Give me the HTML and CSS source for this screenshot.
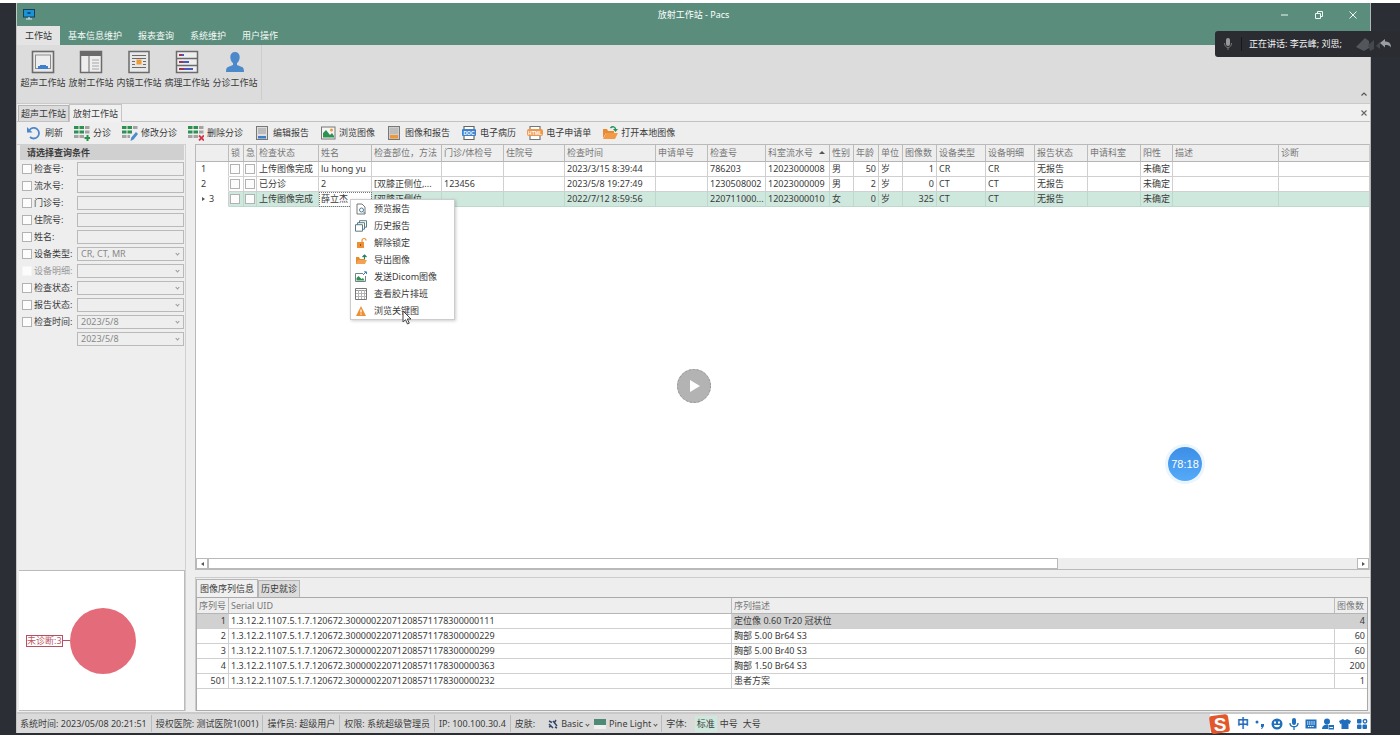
FILE: index.html
```html
<!DOCTYPE html>
<html lang="zh-CN">
<head>
<meta charset="utf-8">
<title>放射工作站 - Pacs</title>
<link rel="stylesheet" href="styles.css">
</head>
<body>
<div class="window">
  <header class="titlebar">
    <svg class="app-icon" width="12" height="11" viewBox="0 0 12 11"><rect x="0.5" y="0.5" width="11" height="7.500" fill="#1b93d8" stroke="#173f57"/><rect x="4.500" y="3" width="3" height="2" fill="#0d4a7a"/><path d="M3 10h6M6 8v2" stroke="#c9e8f5" stroke-width="1.200"/></svg>
    <h1 class="title">放射工作站 - Pacs</h1>
    <div class="controls">
      <button aria-label="最小化"><svg width="10" height="10" viewBox="0 0 10 10"><path d="M1 5h7"/></svg></button>
      <button aria-label="还原"><svg width="10" height="10" viewBox="0 0 10 10"><path d="M1.500 3.500h5v5h-5zM3.500 3V1.500h5v5H7"/></svg></button>
      <button aria-label="关闭"><svg width="10" height="10" viewBox="0 0 10 10"><path d="M1.500 1.500l7 7M8.500 1.500l-7 7"/></svg></button>
    </div>
  </header>
  <nav class="menu-tabs">
    <button class="active">工作站</button><button>基本信息维护</button><button>报表查询</button><button>系统维护</button><button>用户操作</button>
  </nav>
  <section class="ribbon">
    <div class="ribbon-group">
      <button><svg width="24" height="24" viewBox="0 0 24 24"><rect x="1.500" y="1.500" width="21" height="21" fill="#e8e8e8" stroke="#6b6b6b" stroke-width="1.600"/><rect x="4.500" y="5" width="15" height="13.500" fill="#eee" stroke="#8b8b8b"/><path d="M7 19v-3h2v-1h6v1h2v3z" fill="#3f7fcf"/></svg>超声工作站</button>
      <button><svg width="24" height="24" viewBox="0 0 24 24"><rect x="1.500" y="1.500" width="21" height="21" fill="#eee" stroke="#6b6b6b" stroke-width="1.500"/><path d="M1 1h22v5H1z" fill="#6b6b6b"/><path d="M10 6v16" stroke="#6b6b6b"/><path d="M13 10h7M13 13h7M13 16h7M13 19h7" stroke="#a5a5a5" stroke-width="1.200"/></svg>放射工作站</button>
      <button><svg width="24" height="24" viewBox="0 0 24 24"><rect x="2" y="1.500" width="20" height="21" fill="#e8e8e8" stroke="#6b6b6b" stroke-width="1.500"/><path d="M5 5.500h14M5 8.500h14M5 11.500h3M16 11.500h3M5 14.500h3M16 14.500h3M5 17.500h14" stroke="#6b6b6b" stroke-width="1.200"/><rect x="9.500" y="9.500" width="5" height="5" fill="#f09a35"/></svg>内镜工作站</button>
      <button><svg width="24" height="24" viewBox="0 0 24 24"><path d="M1.500 1.500h21v21h-21zM1.500 8.500h21M1.500 15.500h21" fill="#eee" stroke="#6b6b6b" stroke-width="1.500"/><path d="M4 5h4M4 12h5M4 19h7" stroke="#9b3355" stroke-width="2"/><path d="M7 5h2M8 12h6M9 19h9" stroke="#4b59ba" stroke-width="2"/></svg>病理工作站</button>
      <button><svg width="24" height="24" viewBox="0 0 24 24"><path d="M12 2c3 0 4.700 2 4.700 5 0 3-1.400 5.300-2.700 6v2l5 2c1.300.5 2 2 2 5H3c0-3 .7-4.500 2-5l5-2v-2C8.700 12.300 7.300 10 7.300 7c0-3 1.700-5 4.700-5z" fill="#4c89cb"/></svg>分诊工作站</button>
    </div>
    <button class="collapse" aria-label="折叠功能区"><svg width="8" height="6" viewBox="0 0 8 6"><path d="M1.500 4.500L4 2l2.500 2.500" fill="none" stroke="#555" stroke-width="1.200"/></svg></button>
  </section>
  <nav class="doc-tabs">
    <button>超声工作站</button><button class="active">放射工作站</button>
    <button class="close-doc" aria-label="关闭标签页"><svg width="8" height="8" viewBox="0 0 8 8"><path d="M1.500 1.500l5 5M6.500 1.500l-5 5" stroke="#666" stroke-width="1.100"/></svg></button>
  </nav>
  <div class="toolbar">
    <button><svg width="16" height="16" viewBox="0 0 16 16"><path d="M3.500 5A5.300 5.300 0 1 1 4 12" fill="none" stroke="#4b87cc" stroke-width="1.800"/><path d="M1 2v5.500h5.500z" fill="#4b87cc"/></svg>刷新</button>
    <button><svg width="16" height="16" viewBox="0 0 16 16"><path d="M0 1h4.500v3H0zM5.500 1H10v3H5.500zM0 5.500h4.500v3H0zM5.500 5.500H10v3H5.500z" fill="#2f9151"/><path d="M11 1h4.500v3H11zM11 5.500h4.500v3H11zM0 10h4.500v3H0zM5.500 10H10v3H5.500z" fill="#a3a3a3"/><path d="M13.500 10v6M10.500 13h6" stroke="#249247" stroke-width="2"/></svg>分诊</button>
    <button><svg width="16" height="16" viewBox="0 0 16 16"><path d="M0 1h4.500v3H0zM5.500 1H10v3H5.500zM0 5.500h4.500v3H0zM5.500 5.500H10v3H5.500z" fill="#2f9151"/><path d="M11 1h4.500v3H11zM0 10h4.500v3H0zM5.500 10H8v3H5.500z" fill="#a3a3a3"/><path d="M8.500 16l.8-3.500L14 7l2 2-4.500 5.500z" fill="#4d8bce"/></svg>修改分诊</button>
    <button><svg width="16" height="16" viewBox="0 0 16 16"><path d="M0 1h4.500v3H0zM5.500 1H10v3H5.500zM0 5.500h4.500v3H0zM5.500 5.500H10v3H5.500z" fill="#2f9151"/><path d="M11 1h4.500v3H11zM11 5.500h4.500v3H11zM0 10h4.500v3H0zM5.500 10H10v3H5.500z" fill="#a3a3a3"/><path d="M11 10.500l5 5M16 10.500l-5 5" stroke="#d0384f" stroke-width="1.800"/></svg>删除分诊</button>
    <button><svg width="16" height="16" viewBox="0 0 16 16"><rect x="2.500" y="1.500" width="11" height="13" fill="#dedede" stroke="#777"/><path d="M4 4h8M4 6h8M4 8h8" stroke="#999"/><path d="M4 11h8v2.500H4z" fill="#3d7fc7"/></svg>编辑报告</button>
    <button><svg width="16" height="16" viewBox="0 0 16 16"><rect x="1.500" y="2" width="13.500" height="12" fill="#f5f5f5" stroke="#777"/><path d="M3 12.500V8l3-3 4 5 2-2 2 3v1.500z" fill="#2f9151"/><circle cx="11.500" cy="5" r="1.500" fill="#f09a35"/></svg>浏览图像</button>
    <button><svg width="16" height="16" viewBox="0 0 16 16"><rect x="2.500" y="1.500" width="11" height="13" fill="#cfcfcf" stroke="#777"/><path d="M4 4h8M4 6h8M4 8h8" stroke="#aaa"/><path d="M4 10h8v3.500H4z" fill="#ef963d"/></svg>图像和报告</button>
    <button><svg width="16" height="16" viewBox="0 0 16 16"><path d="M3 5V1.500h10V5M3 10v4.500h10V10" fill="#fff" stroke="#666" stroke-width="1.200"/><rect x="1" y="4" width="14" height="7" rx="1" fill="#3d82cd"/><text x="8" y="9.500" class="icon-text">DOC</text></svg>电子病历</button>
    <button><svg width="16" height="16" viewBox="0 0 16 16"><path d="M3 5V1.500h10V5M3 10v4.500h10V10" fill="#fff" stroke="#777" stroke-width="1.200"/><rect x="0" y="4" width="16" height="7" rx="2" fill="#ee964a"/><text x="8" y="9.500" class="icon-text">HTML</text></svg>电子申请单</button>
    <button><svg width="16" height="16" viewBox="0 0 16 16"><path d="M1 13V4h4l1 2h6v2H4z" fill="#e88a32"/><path d="M1 14l3-6h12l-3 6z" fill="#f29a45"/><path d="M8.500 3c2-2 5-1.500 5 1.500" fill="none" stroke="#26915a" stroke-width="1.500"/><path d="M11 4h5l-2.500 3z" fill="#26915a"/></svg>打开本地图像</button>
  </div>
  <main class="workspace">
    <aside class="side">
      <form class="query">
        <h2>请选择查询条件</h2>
        <div class="field"><label><input type="checkbox">检查号:</label><input type="text" aria-label="检查号"></div>
        <div class="field"><label><input type="checkbox">流水号:</label><input type="text" aria-label="流水号"></div>
        <div class="field"><label><input type="checkbox">门诊号:</label><input type="text" aria-label="门诊号"></div>
        <div class="field"><label><input type="checkbox">住院号:</label><input type="text" aria-label="住院号"></div>
        <div class="field"><label><input type="checkbox">姓名:</label><input type="text" aria-label="姓名"></div>
        <div class="field"><label><input type="checkbox">设备类型:</label><span class="combo"><select aria-label="设备类型"><option>CR, CT, MR</option></select></span></div>
        <div class="field off"><label><input type="checkbox" disabled>设备明细:</label><span class="combo"><select aria-label="设备明细"><option></option></select></span></div>
        <div class="field"><label><input type="checkbox">检查状态:</label><span class="combo"><select aria-label="检查状态"><option></option></select></span></div>
        <div class="field"><label><input type="checkbox">报告状态:</label><span class="combo"><select aria-label="报告状态"><option></option></select></span></div>
        <div class="field"><label><input type="checkbox">检查时间:</label><span class="combo"><select aria-label="开始日期"><option>2023/5/8</option></select></span></div>
        <div class="field"><span class="combo"><select aria-label="结束日期"><option>2023/5/8</option></select></span></div>
      </form>
      <figure class="chart">
        <figcaption>未诊断:3</figcaption><span class="leader"></span><span class="pie"></span>
      </figure>
    </aside>
    <div class="content">
      <section class="grid-panel">
        <table class="grid">
          <colgroup><col class="w33"><col class="w15"><col class="w13"><col class="w62"><col class="w53"><col class="w70"><col class="w62"><col class="w61"><col class="w91"><col class="w52"><col class="w58"><col class="w64"><col class="w24"><col class="w25"><col class="w24"><col class="w34"><col class="w49"><col class="w49"><col class="w53"><col class="w53"><col class="w32"><col class="w106"><col></colgroup>
          <thead><tr><th></th><th>锁</th><th>急</th><th>检查状态</th><th>姓名</th><th>检查部位，方法</th><th>门诊/体检号</th><th>住院号</th><th>检查时间</th><th>申请单号</th><th>检查号</th><th class="sorted">科室流水号</th><th>性别</th><th>年龄</th><th>单位</th><th>图像数</th><th>设备类型</th><th>设备明细</th><th>报告状态</th><th>申请科室</th><th>阳性</th><th>描述</th><th>诊断</th></tr></thead>
          <tbody>
            <tr><td class="idx">1</td><td><input type="checkbox" aria-label="锁"></td><td><input type="checkbox" aria-label="急"></td><td>上传图像完成</td><td>lu hong yu</td><td></td><td></td><td></td><td>2023/3/15 8:39:44</td><td></td><td>786203</td><td>12023000008</td><td>男</td><td class="num">50</td><td>岁</td><td class="num">1</td><td>CR</td><td>CR</td><td>无报告</td><td></td><td>未确定</td><td></td><td></td></tr>
            <tr><td class="idx">2</td><td><input type="checkbox" aria-label="锁"></td><td><input type="checkbox" aria-label="急"></td><td>已分诊</td><td>2</td><td>[双膝正侧位,...</td><td>123456</td><td></td><td>2023/5/8 19:27:49</td><td></td><td>1230508002</td><td>12023000009</td><td>男</td><td class="num">2</td><td>岁</td><td class="num">0</td><td>CT</td><td>CT</td><td>无报告</td><td></td><td>未确定</td><td></td><td></td></tr>
            <tr class="selected"><td class="idx current">3</td><td><input type="checkbox" aria-label="锁"></td><td><input type="checkbox" aria-label="急"></td><td>上传图像完成</td><td class="focus">薛立杰</td><td>[双膝正侧位,...</td><td></td><td></td><td>2022/7/12 8:59:56</td><td></td><td>220711000...</td><td>12023000010</td><td>女</td><td class="num">0</td><td>岁</td><td class="num">325</td><td>CT</td><td>CT</td><td>无报告</td><td></td><td>未确定</td><td></td><td></td></tr>
          </tbody>
        </table>
        <div class="scrollbar"><button class="arrow" aria-label="向左滚动"></button><span class="track"><span class="thumb"></span></span><button class="arrow right" aria-label="向右滚动"></button></div>
        <menu class="context">
          <li><button><svg width="12" height="12" viewBox="0 0 12 12"><path d="M2 1h5l3 3v7H2z" fill="#fff" stroke="#777"/><circle cx="6.500" cy="7" r="2" fill="none" stroke="#4b7f93"/><path d="M8 8.500l2 2" stroke="#4b7f93"/></svg>预览报告</button></li>
          <li><button><svg width="12" height="12" viewBox="0 0 12 12"><path d="M4.500 3V.7h7v6.500h-2M2.500 5V2.700h7v6.500h-2M.5 4.700h7v6.500h-7z" fill="#fff" stroke="#5c7d86"/></svg>历史报告</button></li>
          <li><button><svg width="12" height="12" viewBox="0 0 12 12"><path d="M2 5h7v6H2z" fill="#ee8f35"/><path d="M7 5V3.500a2 2 0 0 1 4 0" fill="none" stroke="#ee8f35" stroke-width="1.200"/><path d="M5.500 7v2" stroke="#9b5419"/></svg>解除锁定</button></li>
          <li><button><svg width="12" height="12" viewBox="0 0 12 12"><path d="M1 10V3h3l1 2h5v5z" fill="#e58b32"/><path d="M1 10l2-4h9l-2 4z" fill="#f4a252"/><path d="M9.500 5V1M7.500 3l2-2 2 2" fill="none" stroke="#278365" stroke-width="1.200"/></svg>导出图像</button></li>
          <li><button><svg width="12" height="12" viewBox="0 0 12 12"><path d="M8 2.500H.5v8h10V5" fill="#fff" stroke="#728487"/><path d="M1.500 9.500V7l2-2 3 3 1.500-1 1.500 2.500z" fill="#2f9151"/><path d="M8 4l3-3M9 .8h2.500V3" stroke="#3f82b5" fill="none"/></svg>发送Dicom图像</button></li>
          <li><button><svg width="12" height="12" viewBox="0 0 12 12"><path d="M.5.5h11v11H.5z" fill="#fff" stroke="#777"/><path d="M1 2.500h10" stroke="#999"/><path d="M1 5.500h10M1 8.500h10M3.500 2v9M6.500 2v9M9.500 2v9" stroke="#b5b5b5"/></svg>查看胶片排班</button></li>
          <li><button><svg width="12" height="12" viewBox="0 0 12 12"><path d="M6 1l5 10H1z" fill="#ef8f35"/><path d="M6 4.500v3M6 8.500v1.200" stroke="#fff" stroke-width="1.200"/></svg>浏览关键图</button></li>
        </menu>
        <svg class="cursor" width="10" height="15" viewBox="0 0 10 15"><path d="M1 1v11l2.500-2.300L5.500 14l1.800-.8-2-4.200H9z" fill="#fff" stroke="#444"/></svg>
      </section>
      <section class="series-panel">
        <nav class="series-tabs"><button class="active">图像序列信息</button><button>历史就诊</button></nav>
        <div class="series-box">
        <table class="grid series">
          <colgroup><col class="w32"><col class="uid"><col><col class="w32"></colgroup>
          <thead><tr><th>序列号</th><th>Serial UID</th><th>序列描述</th><th>图像数</th></tr></thead>
          <tbody>
            <tr class="picked"><td class="num">1</td><td class="plain">1.3.12.2.1107.5.1.7.120672.30000022071208571178300000111</td><td>定位像 0.60 Tr20 冠状位</td><td class="num">4</td></tr>
            <tr><td class="num">2</td><td>1.3.12.2.1107.5.1.7.120672.30000022071208571178300000229</td><td>胸部 5.00 Br64 S3</td><td class="num">60</td></tr>
            <tr><td class="num">3</td><td>1.3.12.2.1107.5.1.7.120672.30000022071208571178300000299</td><td>胸部 5.00 Br40 S3</td><td class="num">60</td></tr>
            <tr><td class="num">4</td><td>1.3.12.2.1107.5.1.7.120672.30000022071208571178300000363</td><td>胸部 1.50 Br64 S3</td><td class="num">200</td></tr>
            <tr><td class="num">501</td><td>1.3.12.2.1107.5.1.7.120672.30000022071208571178300000232</td><td>患者方案</td><td class="num">1</td></tr>
          </tbody>
        </table>
        </div>
      </section>
    </div>
  </main>
  <footer class="statusbar">
    <span class="cell">系统时间: 2023/05/08 20:21:51</span>
    <span class="cell">授权医院: 测试医院1(001)</span>
    <span class="cell">操作员: 超级用户</span>
    <span class="cell">权限: 系统超级管理员</span>
    <span class="cell">IP: 100.100.30.4</span>
    <span class="cell skins">皮肤:
      <button><svg width="10" height="10" viewBox="0 0 10 10"><path d="M1 2l3 1.500M5 2l4 5M1 5l4 4M8 1L6.500 3.500M1 8l2-1M7 8l2 1" fill="none" stroke="#34466f" stroke-width="1.500"/></svg>Basic<i class="chev"></i></button>
      <button><svg width="12" height="12" viewBox="0 0 12 12"><path d="M0 1h12v6H0z" fill="#4e8a74"/><path d="M0 7h12v4H0z" fill="#efefef"/></svg>Pine Light<i class="chev"></i></button>
    </span>
    <span class="cell fonts">字体: <span class="sizes"><button class="active">标准</button><button>中号</button><button>大号</button></span></span>
    <div class="ime">
      <svg class="sogou" width="24" height="22" viewBox="0 0 24 22"><rect x="2" y="2" width="19" height="18" rx="3" fill="#e2572b" transform="rotate(-8 12 11)"/><text x="12" y="18" class="sogou-text">S</text></svg>
      <b>中</b>
      <svg width="12" height="12" viewBox="0 0 12 12"><circle cx="3" cy="4" r="1.500"/><path d="M7 6h3v2l-2 3H7l1-2H7z"/></svg>
      <svg width="12" height="12" viewBox="0 0 12 12"><circle cx="6" cy="6" r="5.500"/><path d="M3 3.500h2v2H3zM7 3.500h2v2H7zM3 7h6c0 3-6 3-6 0z" fill="#fff"/></svg>
      <svg width="12" height="12" viewBox="0 0 12 12"><rect x="4" y="0" width="4" height="7" rx="2"/><path d="M2 5c0 5 8 5 8 0M6 9v3" fill="none" stroke="#1f6fbc" stroke-width="1.300"/></svg>
      <svg width="12" height="12" viewBox="0 0 12 12"><path d="M.5 1.500h11v9H.5z"/><path d="M2 4h8M2 6h8M3 8.500h6" stroke="#fff" stroke-dasharray="1.200 .6"/></svg>
      <svg width="12" height="12" viewBox="0 0 12 12"><circle cx="5" cy="3.500" r="3"/><path d="M0 11c0-3 2-4.500 5-4.500h1V11z"/><path d="M6.500 7h5.500v4.500H6.500z"/><path d="M7.500 9.500h3.500" stroke="#fff"/></svg>
      <svg width="12" height="12" viewBox="0 0 12 12"><path d="M4 1c1 1.500 3 1.500 4 0l4 2-1.300 3L9.500 5.500V11h-7V5.500L1.300 6 0 3z"/></svg>
      <svg width="12" height="12" viewBox="0 0 12 12"><rect x="1" y="1" width="4.500" height="4.500" rx="1"/><circle cx="9" cy="3.300" r="1.800" fill="none" stroke="#1f6fbc" stroke-width="1.300"/><rect x="1" y="6.500" width="4.500" height="4.500" rx="1"/><rect x="6.500" y="6.500" width="4.500" height="4.500" rx="1"/></svg>
    </div>
  </footer>
</div>
<div class="speaking">
  <svg width="10" height="14" viewBox="0 0 10 14"><rect x="3" y="1" width="4" height="8" rx="2" fill="#999"/><path d="M1.500 6c0 6 7 6 7 0M5 10.500V13" fill="none" stroke="#777"/></svg>
  <span class="names">正在讲话: 李云峰; 刘思;</span>
  <svg width="36" height="18" viewBox="0 0 36 18"><path d="M0 12l9-9 4 3v7l-5 3z" fill="#53565b"/><path d="M12 10l6-5v9l-4 2z" fill="#45484d"/><path d="M20 11l4-4v7z" fill="#45484d"/><path d="M24 8l5-4v2.500c4 0 6 2 6 6-1.500-2-3-2.500-6-2.500v2.500z" fill="#9a9da1"/></svg>
</div>
<button class="play" aria-label="播放"><svg width="36" height="36" viewBox="0 0 36 36"><circle cx="18" cy="18" r="17" fill="#b3b3b3"/><circle cx="18" cy="18" r="16.500" fill="none" stroke="#989898" stroke-dasharray="2 2"/><path d="M14 12v12l10-6z" fill="#fff"/></svg></button>
<div class="timer">78:18</div>
</body>
</html>
```
FILE: styles.css
```css
*, *::before, *::after { box-sizing: border-box; }
html, body { height: 100%; }
body {
  margin: 0;
  padding: 3px 29px 2px 16px;
  position: relative;
  overflow: hidden;
  background: linear-gradient(#fff 0 3px, #2c2e36 3px);
  font: 9px/14px "Noto Sans", "Noto Sans CJK SC", sans-serif;
  color: #3a3a3a;
}
button, input, select { font: inherit; color: inherit; margin: 0; padding: 0; border: 0; background: none; border-radius: 0; }
button { white-space: nowrap; }
svg { flex: none; display: block; }
h1, h2 { margin: 0; font-size: inherit; }

.window { height: 100%; display: flex; flex-direction: column; background: #eee; border-left: 1px solid #c5c5c5; border-right: 1px solid #b5b5b5; }

.titlebar { height: 23px; flex: none; display: grid; grid-template-columns: 1fr auto 1fr; align-items: center; background: #5a8d7c; color: #fff; }
.app-icon { margin-left: 6px; }
.title { font-weight: 400; }
.controls { display: flex; justify-content: flex-end; }
.controls button { width: 34px; height: 22px; display: grid; place-items: center; }
.controls path { fill: none; stroke: #f1f7f4; }

.menu-tabs { height: 19px; flex: none; display: flex; background: #5a8d7c; color: #f4faf7; }
.menu-tabs button { padding: 0 8px; }
.menu-tabs .active { background: #e4e4e4; color: #333; }

.ribbon { height: 59px; flex: none; display: flex; justify-content: space-between; align-items: flex-end; background: #dcdcdc; border-bottom: 1px solid #c9c9c9; }
.ribbon-group { align-self: stretch; display: flex; padding: 5px 2px 0 2px; margin-bottom: 3px; border-right: 1px solid #cdcdcd; }
.ribbon-group button { width: 48px; display: flex; flex-direction: column; align-items: center; justify-content: flex-start; gap: 2px; }
.collapse { padding: 6px 2px; }

.doc-tabs { height: 18px; flex: none; display: flex; padding-left: 1px; background: #f0f0f0; border-bottom: 1px solid #c2c2c2; }
.doc-tabs button { padding: 0 2px; border: 1px solid #b5b5b5; border-bottom: 0; background: #dcdcdc; margin-top: 1px; }
.doc-tabs .active { padding: 0 3px; margin: 0 0 -1px; background: #f0f0f0; border-color: #c5c5c5; }
.doc-tabs .close-doc { margin-left: auto; border: 0; background: none; }

.toolbar { height: 22px; flex: none; display: flex; align-items: center; gap: 11px; padding: 0 9px; overflow: hidden; }
.toolbar button { display: flex; align-items: center; gap: 3px; }
.icon-text { font: bold 5px "Liberation Sans", sans-serif; fill: #fff; text-anchor: middle; }

.workspace { flex: 1; min-height: 0; display: flex; gap: 9px; padding-bottom: 1px; }
.side { width: 169px; flex: none; display: flex; flex-direction: column; border-top: 1px solid #d0d0d0; border-right: 1px solid #d0d0d0; }
.query { flex: 1; padding: 0 1px 0 3px; display: flex; flex-direction: column; gap: 3px; }
.query h2 { height: 15px; line-height: 16px; padding-left: 7px; margin-bottom: -1px; background: #d0d0d0; }
.field { height: 14px; display: flex; justify-content: flex-end; }
.field label { flex: 1; display: flex; align-items: center; gap: 2px; padding-left: 2px; }
input[type="checkbox"] { appearance: none; width: 10px; height: 10px; flex: none; display: block; background: #fcfcfc; border: 1px solid #b2b2b2; }
.off { color: #999; }
.off input[type="checkbox"] { border-color: #f5f5f5; }
.field > input, .combo { width: 107px; height: 14px; border: 1px solid #b9b9b9; background: #eee; }
.combo { position: relative; display: flex; color: #888; }
.combo::after, .chev { content: ""; width: 3px; height: 3px; border: solid #999; border-width: 0 1px 1px 0; transform: rotate(45deg); }
.combo::after { position: absolute; right: 4px; top: 4px; pointer-events: none; }
.combo select { appearance: none; width: 100%; padding: 0 3px; line-height: 12px; }
.chart { height: 141px; flex: none; margin: 0 0 0 2px; padding-left: 7px; display: flex; align-items: center; background: #fff; border: 1px solid #bbb; border-left: 0; }
.chart figcaption { border: 1px solid #b5505f; color: #bf5363; line-height: 10px; height: 12px; white-space: nowrap; }
.leader { width: 7px; height: 1px; background: #b5505f; }
.pie { width: 66px; height: 66px; border-radius: 50%; background: #e46b79; }

.content { flex: 1; min-width: 0; display: flex; flex-direction: column; }
.grid-panel { position: relative; flex: 1; display: flex; flex-direction: column; justify-content: space-between; background: #fff; border: 1px solid #b9b9b9; border-right-color: #ccc; }
.grid { width: 100%; table-layout: fixed; border-collapse: separate; border-spacing: 0; }
.grid th { height: 17px; padding: 0 2px; line-height: 16px; text-align: left; font-weight: 400; color: #777; background: #eee; border-right: 1px solid #bcbcbc; border-bottom: 1px solid #b5b5b5; white-space: nowrap; overflow: hidden; }
.grid td { height: 15px; padding: 0 2px; line-height: 14px; border-right: 1px solid #d0d0d0; border-bottom: 1px solid #d0d0d0; white-space: nowrap; overflow: hidden; }
.grid td:has(input) { padding: 0 1px; }
.grid .num { text-align: right; }
.grid .idx { padding-left: 5px; border-color: transparent; border-right-color: #d0d0d0; }
.grid .current::before { content: ""; display: inline-block; border: 2px solid transparent; border-left: 3px solid #555; border-right: 0; margin: 0 4px 2px 1px; vertical-align: middle; }
.selected td:not(.idx) { background: #cfe8de; border-color: #bdd8cd; }
.grid .selected .focus { background: #fff; outline: 1px dotted #777; outline-offset: -1px; }
.sorted::after { content: ""; display: inline-block; margin: 0 0 3px 6px; border: 3px solid transparent; border-top: 0; border-bottom: 3px solid #555; vertical-align: middle; }
.w13 { width: 13px; } .w15 { width: 15px; } .w24 { width: 24px; } .w25 { width: 25px; }
.w32 { width: 32px; } .w33 { width: 33px; } .w34 { width: 34px; } .w49 { width: 49px; }
.w52 { width: 52px; } .w53 { width: 53px; } .w58 { width: 58px; } .w61 { width: 61px; }
.w62 { width: 62px; } .w64 { width: 64px; } .w70 { width: 70px; } .w91 { width: 91px; } .w106 { width: 106px; }
.scrollbar { display: flex; height: 11px; background: #eee; }
.arrow { width: 12px; display: grid; place-items: center; background: #fff; border: 1px solid #b9b9b9; }
.arrow::before { content: ""; border: 2px solid transparent; border-right: 3px solid #555; border-left: 0; }
.arrow.right::before { transform: rotate(180deg); }
.track { flex: 1; display: flex; }
.thumb { width: 74%; background: #fff; border: 1px solid #b9b9b9; }

.context { position: absolute; left: 154px; top: 54px; width: 105px; margin: 0; padding: 0; list-style: none; background: #fff; border: 1px solid #ccc; box-shadow: 1px 1px 3px rgba(0, 0, 0, .2); }
.context button { height: 17px; width: 100%; display: flex; align-items: center; gap: 7px; padding-left: 4px; }
.cursor { position: absolute; left: 206px; top: 165px; }

.series-panel { height: 134px; flex: none; display: flex; flex-direction: column; margin-top: 7px; padding: 1px 2px 0 0; border-top: 1px solid #ccc; border-left: 1px solid #ccc; }
.series-tabs { display: flex; align-items: flex-end; height: 18px; }
.series-tabs button { height: 17px; padding: 0 2px; background: #dcdcdc; border: 1px solid #b5b5b5; border-bottom: 0; }
.series-tabs .active { height: 18px; padding: 0 3px; background: #f0f0f0; }
.series-box { flex: 1; background: #fff; border: 1px solid #aaa; }
.uid { width: 43%; }
.series th { height: 16px; line-height: 15px; }
.grid tr > :last-child { border-right: 0; }
.picked td { background: #d1d1d1; }
.picked .plain { background: #fff; }

.statusbar { height: 21px; flex: none; display: flex; align-items: center; padding-left: 3px; background: #dadada; border-top: 2px solid #c9c9c9; white-space: nowrap; }
.cell { display: flex; align-items: center; height: 17px; padding: 1px 4px 0 0; margin-right: 4px; border-right: 1px solid #bbb; }
.skins { gap: 5px; }
.skins button { display: flex; align-items: center; gap: 3px; }
.skins button:first-of-type { margin-left: 8px; }
.chev { border-color: #555; }
.fonts { border-right: 0; gap: 8px; }
.sizes { display: flex; gap: 1px; }
.sizes button { height: 16px; padding: 0 2px; }
.sizes .active { background: #cfe8de; }
.ime { align-self: stretch; margin-left: auto; display: flex; align-items: center; gap: 5px; padding-right: 2px; background: #fff; fill: #1f6fbc; }
.ime b { font-size: 12px; width: 12px; color: #1f6fbc; }
.sogou { margin: -3px 0 -3px -2px; }
.sogou-text { font: bold 19px "Liberation Sans", sans-serif; fill: #fff; text-anchor: middle; }

.speaking { position: absolute; right: 0; top: 31px; width: 185px; height: 26px; padding: 0 8px; display: flex; align-items: center; gap: 8px; background: #2a2c31; color: #f2f2f2; border-radius: 3px 0 0 3px; }
.names { flex: 1; padding-left: 7px; border-left: 1px solid #17181b; white-space: nowrap; }
.play { position: absolute; left: 676px; top: 368px; }
.timer { position: absolute; left: 1168px; top: 447px; width: 34px; height: 34px; border-radius: 50%; background: linear-gradient(#3d8ee6, #55aaf8); box-shadow: 0 0 0 3px #eaf5fd; color: #fff; font: 11px/34px "Liberation Sans", sans-serif; text-align: center; }
```
